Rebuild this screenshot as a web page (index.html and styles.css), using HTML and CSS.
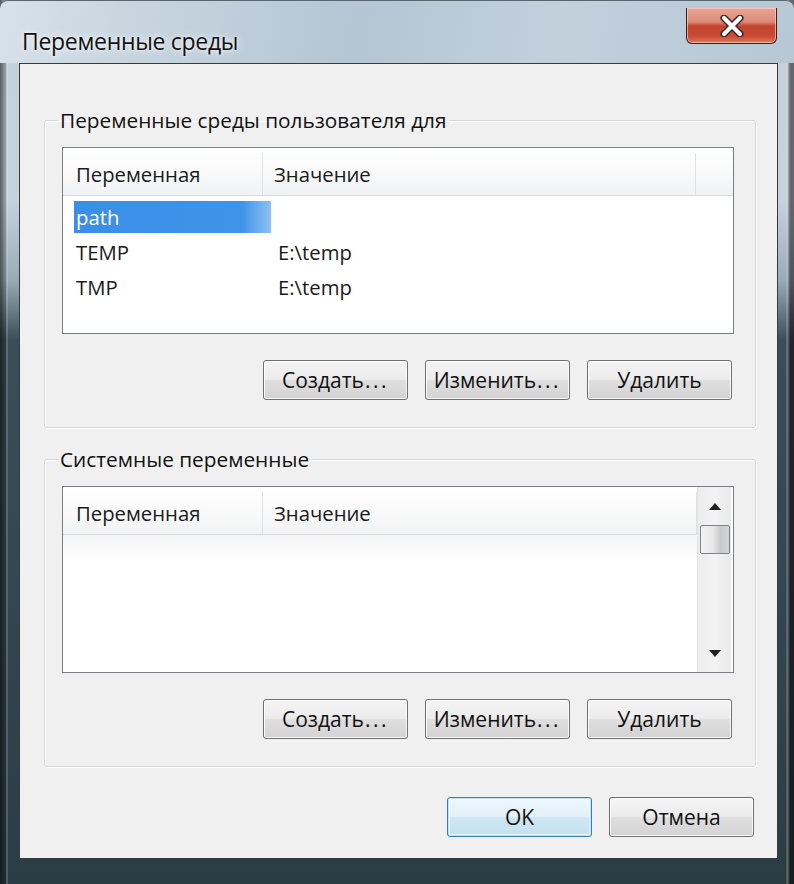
FILE: index.html
```html
<!DOCTYPE html>
<html lang="ru">
<head>
<meta charset="utf-8">
<title>Переменные среды</title>
<link rel="stylesheet" href="styles.css">
</head>
<body>
<div class="window">
  <div class="titlebar">
    <div class="title">Переменные среды</div>
    <div class="close">
      <svg width="30" height="22" viewBox="0 0 30 22">
        <path d="M7 3 L23 19 M23 3 L7 19" stroke="#3a2020" stroke-width="7" stroke-linecap="round"/>
        <path d="M7 3 L23 19 M23 3 L7 19" stroke="#ffffff" stroke-width="4.2" stroke-linecap="round"/>
      </svg>
    </div>
  </div>
  <div class="content">
    <fieldset class="group group-user">
      <legend>Переменные среды пользователя для</legend>
      <div class="list">
        <div class="header">
          <div class="hcell hname">Переменная</div>
          <div class="hcell hvalue">Значение</div>
          <div class="hcell hstub"></div>
        </div>
        <div class="rows">
          <div class="row"><div class="name selected">path</div><div class="value"></div></div>
          <div class="row"><div class="name">TEMP</div><div class="value">E:\temp</div></div>
          <div class="row"><div class="name">TMP</div><div class="value">E:\temp</div></div>
        </div>
      </div>
      <div class="buttons">
        <button class="btn">Создать<span class="dots">...</span></button>
        <button class="btn">Изменить<span class="dots">...</span></button>
        <button class="btn">Удалить</button>
      </div>
    </fieldset>
    <fieldset class="group group-system">
      <legend>Системные переменные</legend>
      <div class="list list-sys">
        <div class="list-main">
          <div class="header">
            <div class="hcell hname">Переменная</div>
            <div class="hcell hvalue">Значение</div>
          </div>
          <div class="shade"></div>
        </div>
        <div class="scrollbar">
          <div class="arrow up"><svg width="12" height="8" viewBox="0 0 12 8"><path d="M0 8 L6 1 L12 8 Z" fill="#222"/></svg></div>
          <div class="thumb"></div>
          <div class="track"></div>
          <div class="arrow down"><svg width="12" height="8" viewBox="0 0 12 8"><path d="M0 0 L6 7 L12 0 Z" fill="#222"/></svg></div>
        </div>
      </div>
      <div class="buttons">
        <button class="btn">Создать<span class="dots">...</span></button>
        <button class="btn">Изменить<span class="dots">...</span></button>
        <button class="btn">Удалить</button>
      </div>
    </fieldset>
    <div class="footer">
      <button class="btn btn-default">OK</button>
      <button class="btn">Отмена</button>
    </div>
  </div>
</div>
</body>
</html>
```
FILE: styles.css
```css
html, body {
  margin: 0;
  padding: 0;
  background: #1d282e;
}
.window {
  width: 794px;
  height: 884px;
  box-sizing: border-box;
  display: flex;
  flex-direction: column;
  padding: 0 16px 25px 19px;
  background:
    linear-gradient(90deg, rgba(0,0,0,0.55) 0, rgba(0,0,0,0.2) 6px, rgba(255,255,255,0.35) 7px, rgba(0,0,0,0) 8px, rgba(0,0,0,0) 786px, rgba(255,255,255,0.3) 787px, rgba(0,0,0,0.5) 790px),
    linear-gradient(180deg, #c3d0da 0, #c6d3dd 200px, #9aabb7 280px, #3b4e58 340px, #2c3c44 100%);
  font-family: "Open Sans", "Noto Sans", sans-serif;
  color: #1a1a1a;
}
.titlebar {
  height: 64px;
  display: flex;
  justify-content: space-between;
  align-items: flex-start;
  margin-left: -19px;
  margin-right: -16px;
  padding-left: 22px;
  padding-right: 17px;
  background: linear-gradient(100deg, #d7e1e9 0, #c9d6e0 15%, #b4c5d3 45%, #c2d0dc 70%, #b7c7d4 100%);
  border-top: 1px solid #59666e;
  border-radius: 8px 8px 0 0;
}
.title {
  font-size: 23px;
  line-height: 30px;
  margin-top: 25px;
  letter-spacing: -0.3px;
  color: #111;
  text-shadow: 0 0 8px rgba(255,255,255,0.9), 0 0 3px rgba(255,255,255,0.8);
}
.close {
  margin-top: 7px;
  width: 89px;
  height: 35px;
  border: 1px solid #3b1e1a;
  border-top: none;
  border-radius: 0 0 6px 6px;
  box-shadow: inset 0 0 0 1px rgba(255,220,210,0.6);
  background: linear-gradient(180deg, #e9a596 0, #dc8a78 40%, #c2432c 52%, #c94b33 80%, #dd7a5f 100%);
  display: flex;
  align-items: center;
  justify-content: center;
}
.content {
  flex: 1;
  background: #f0f0f0;
  border: 1px solid #343c40;
  padding: 44px 23px 21px 24px;
  display: flex;
  flex-direction: column;
}
.group {
  margin: 0 -2px 0 0;
  padding: 15px 21px 27px 17px;
  border: 1px solid #d5d9dc;
  border-radius: 3px;
  box-shadow: 1px 1px 0 #ffffff, inset 1px 1px 0 #ffffff;
  min-width: 0;
}
.group-system {
  margin-top: 19px;
}
legend {
  font-size: 20.8px;
  line-height: 24px;
  padding: 0 2px;
  margin-left: -4px;
  color: #111;
}
.list {
  height: 185px;
  background: #ffffff;
  border: 1px solid #7a7f85;
  display: flex;
  flex-direction: column;
}
.header {
  height: 47px;
  display: flex;
  background: linear-gradient(180deg, #ffffff 0, #fafafa 50%, #f1f2f3 100%);
  border-bottom: 1px solid #d6d8da;
  font-size: 20.3px;
}
.hcell {
  display: flex;
  align-items: center;
  box-sizing: border-box;
  border-right: 1px solid #dfe2e4;
  margin: 5px 0 0 0;
}
.hname {
  width: 200px;
  padding-left: 13px;
}
.hvalue {
  flex: 1;
  padding-left: 11px;
}
.hstub {
  width: 37px;
  border-right: none;
}
.rows {
  padding-top: 3px;
  font-size: 20.3px;
}
.row {
  height: 35px;
  display: flex;
  align-items: center;
}
.name {
  width: 197px;
  height: 32px;
  box-sizing: border-box;
  margin-left: 11px;
  padding-left: 2px;
  display: flex;
  align-items: center;
}
.name.selected {
  background: linear-gradient(90deg, #3a8ee6 0, #3f93e8 85%, #8fc0f0 100%);
  color: #ffffff;
}
.value {
  padding-left: 7px;
}
.list-sys {
  flex-direction: row;
}
.list-main {
  flex: 1;
  display: flex;
  flex-direction: column;
}
.shade {
  height: 26px;
  background: linear-gradient(180deg, #f4f4f4 0, #ffffff 100%);
}
.scrollbar {
  width: 33px;
  margin-right: 2px;
  background: linear-gradient(90deg, #ececec 0, #f3f3f3 50%, #e9e9e9 100%);
  border-left: 1px solid #e4e4e4;
  display: flex;
  flex-direction: column;
  align-items: center;
}
.arrow {
  height: 38px;
  width: 100%;
  display: flex;
  align-items: center;
  justify-content: center;
}
.arrow.up {
  height: 38px;
}
.arrow.down {
  height: 36px;
}
.thumb {
  width: 28px;
  height: 27px;
  border: 1px solid #7e8286;
  border-radius: 2px;
  background: linear-gradient(90deg, #f3f3f3 0, #e6e6e6 45%, #c9c9c9 70%, #d6d6d6 100%);
}
.track {
  flex: 1;
}
.buttons {
  display: flex;
  justify-content: flex-end;
  gap: 17px;
  margin-top: 26px;
  margin-right: 2px;
}
.btn {
  width: 145px;
  height: 40px;
  border: 1px solid #6f6f6f;
  border-radius: 3px;
  background: linear-gradient(180deg, #f4f4f4 0, #ececec 48%, #dedede 52%, #d3d3d3 100%);
  box-shadow: inset 0 0 0 1px rgba(255,255,255,0.85);
  font-family: "Open Sans", "Noto Sans", sans-serif;
  font-size: 21px;
  color: #111;
  padding: 0;
  white-space: nowrap;
}
.dots {
  letter-spacing: 2.5px;
  margin-left: 1px;
}
.footer {
  display: flex;
  justify-content: flex-end;
  gap: 17px;
  margin-top: 30px;
  margin-right: 0;
}
.btn-default {
  border-color: #3c7fa8;
  background: linear-gradient(180deg, #eef7fc 0, #e3f1f9 48%, #cfe6f3 52%, #c4e0ef 100%);
  box-shadow: inset 0 0 0 1px rgba(180,225,250,0.9), inset 0 0 0 2px rgba(255,255,255,0.6);
}
```
